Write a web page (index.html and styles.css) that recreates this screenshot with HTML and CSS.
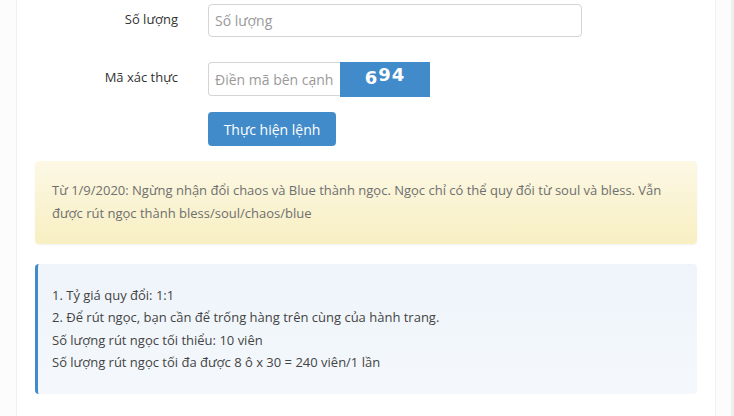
FILE: index.html
```html
<!DOCTYPE html>
<html lang="vi">
<head>
    <meta charset="UTF-8">
    <meta name="viewport" content="width=device-width, initial-scale=1.0">
    <title>Rút ngọc</title>
    <link rel="stylesheet" href="styles.css">
</head>
<body>

    <div class="page">
        <div class="card">

            <form class="form" action="#" method="POST">
                <div class="form-row">
                    <label class="form-label" for="quantity">Số lượng</label>
                    <input class="form-input qty" type="text" id="quantity" name="quantity" placeholder="Số lượng">
                </div>

                <div class="form-row captcha-row">
                    <label class="form-label" for="captcha">Mã xác thực</label>
                    <div class="captcha-group">
                        <input class="form-input captcha-input" type="text" id="captcha" name="captcha" placeholder="Điền mã bên cạnh">
                        <div class="captcha-img"><span class="d-low">6</span><span class="d-high">94</span></div>
                    </div>
                </div>

                <div class="form-row button-row">
                    <span class="form-label"></span>
                    <button class="btn" type="submit">Thực hiện lệnh</button>
                </div>
            </form>

            <div class="alert alert-warning">
                Từ 1/9/2020: Ngừng nhận đổi chaos và Blue thành ngọc. Ngọc chỉ có thể quy đổi từ soul và bless. Vẫn được rút ngọc thành bless/soul/chaos/blue
            </div>

            <div class="note">
                1. Tỷ giá quy đổi: 1:1<br>
                2. Để rút ngọc, bạn cần để trống hàng trên cùng của hành trang.<br>
                Số lượng rút ngọc tối thiểu: 10 viên<br>
                Số lượng rút ngọc tối đa được 8 ô x 30 = 240 viên/1 lần
            </div>

        </div>
    </div>

</body>
</html>
```

FILE: styles.css
```css
body {
    margin: 0;
    font-family: "Open Sans", Arial, sans-serif;
    font-size: 13px;
    color: #333;
    background: #fcfcfc;
}

.page {
    padding: 0 15px 0 16px;
    border-right: 3px solid #efefef;
    height: 416px;
    overflow: hidden;
}

.card {
    background: #fff;
    border-left: 1px solid #f0f0f0;
    border-right: 1px solid #f0f0f0;
    padding: 4px 18px 24px 18px;
    height: 100%;
    box-sizing: border-box;
}

.form-row {
    display: flex;
    align-items: flex-start;
}

.form-label {
    width: 143px;
    margin-right: 30px;
    padding-top: 5px;
    line-height: 20px;
    text-align: right;
    color: #333;
    flex-shrink: 0;
}

.form-input {
    height: 33px;
    padding: 0 6px;
    border: 1px solid #d5d5d5;
    border-radius: 4px;
    box-sizing: border-box;
    font-family: "Open Sans", Arial, sans-serif;
    font-size: 14px;
    color: #555;
    outline: none;
}

.form-input::placeholder {
    color: #999;
}

.qty {
    width: 374px;
}

.captcha-row {
    margin-top: 25px;
}

.captcha-group {
    display: flex;
    align-items: flex-start;
}

.captcha-input {
    width: 132px;
    height: 34px;
    border-right: none;
    border-radius: 4px 0 0 4px;
}

.captcha-img {
    width: 90px;
    height: 35px;
    background: #428bca;
    color: #fff;
    font-family: "DejaVu Sans", sans-serif;
    font-weight: bold;
    font-size: 18px;
    text-align: center;
    line-height: 26px;
    letter-spacing: 1px;
}

.d-low {
    vertical-align: -2px;
}

.d-high {
    vertical-align: 1px;
}

.button-row {
    margin-top: 15px;
}

.btn {
    width: 128px;
    height: 34px;
    background: #428bca;
    color: #fff;
    border: none;
    border-radius: 4px;
    font-family: "Open Sans", Arial, sans-serif;
    font-size: 14px;
    cursor: pointer;
    padding: 0;
}

.alert {
    margin-top: 15px;
    padding: 18px 17px 19px 17px;
    line-height: 23px;
    border-radius: 4px;
    color: #6f6f6f;
}

.alert-warning {
    background: linear-gradient(to bottom, #fcf8e5 0%, #f8efc2 100%);
    box-shadow: 0 1px 2px rgba(0, 0, 0, 0.05);
}

.note {
    margin-top: 20px;
    padding: 20px 14px 21px 14px;
    line-height: 22.3px;
    border-left: 3px solid #428bca;
    border-radius: 4px;
    background: linear-gradient(to bottom, #eef4fa 0%, #f4f8fc 100%);
    color: #444;
}
```
